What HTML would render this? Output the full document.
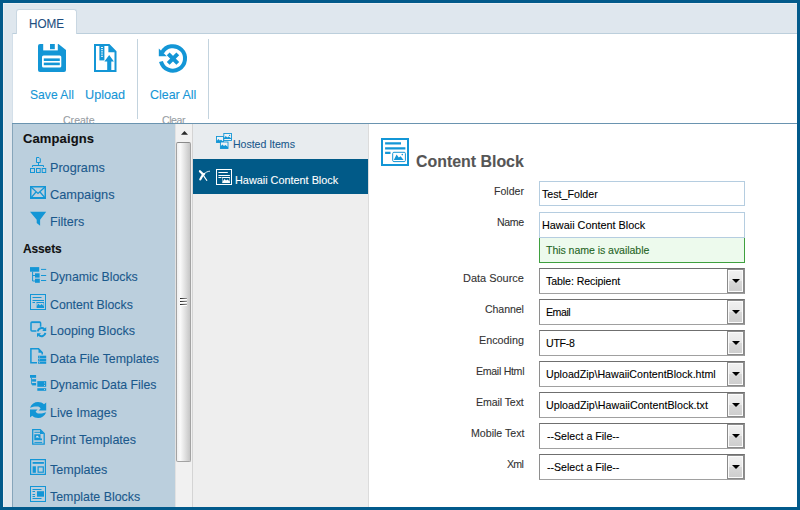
<!DOCTYPE html>
<html>
<head>
<meta charset="utf-8">
<title>Content Block</title>
<style>
*{box-sizing:border-box;margin:0;padding:0}
html,body{width:800px;height:510px;overflow:hidden}
body{background:#025a8b;font-family:"Liberation Sans",sans-serif;position:relative}
.a,.t,svg{position:absolute}
.t{line-height:1;white-space:pre;transform-origin:0 0;-webkit-text-stroke:0.1px currentColor}
svg{overflow:visible}
#inner{left:3px;top:3px;width:794px;height:504px;background:#dfe7ee;border-top:1px solid #ebf0f5;border-left:1px solid #e9eff4}
#ribbon{left:12px;top:33px;width:785px;height:91px;background:#fff;border-top:1px solid #bccfdc;border-left:1px solid #d3dfe9}
#tab{left:16px;top:9px;width:61px;height:25px;background:#fff;border:1px solid #c9d7e2;border-bottom:none;border-radius:3px 3px 0 0}
.sep{width:1px;background:#c3d3de;top:39px;height:80px}
#hline{left:12px;top:123px;width:785px;height:1px;background:#6a94b0}
#left{left:12px;top:124px;width:163px;height:383px;background:#bbcfdd;border-left:1px solid #86a5ba}
#sb{left:175px;top:124px;width:17px;height:383px;background:#f1f1f1;border-left:1px solid #e2e2e2}
#thumb{left:176px;top:142px;width:15px;height:320px;border:1px solid #a3a3a3;border-radius:2px;background:linear-gradient(90deg,#efefef,#fafafa 25%,#e2e2e2 60%,#c6c6c6);border-top-color:#8a8a8a}
#mid{left:192px;top:124px;width:177px;height:383px;background:#eeeeee;border-left:1px solid #d4d4d4;border-right:1px solid #dcdcdc}
#hrow{left:193px;top:124px;width:175px;height:36px;background:#e8ecef}
#sel{left:193px;top:159px;width:175px;height:35px;background:#015a88}
#main{left:369px;top:124px;width:428px;height:383px;background:#fff}
.inp{left:539px;width:206px;height:25px;border:1px solid #b5cde0;background:#fff}
.selb{left:539px;width:206px;height:26px;border:1px solid #8e8e8e;border-top-color:#6f6f6f;border-bottom-color:#a0a0a0;background:#fff}
.btn{position:absolute;right:0;top:0;width:17px;height:24px;border:1px solid #8a8a8a;background:linear-gradient(#f1f1f1,#e8e8e8 48%,#d8d8d8 52%,#cdcdcd);box-shadow:inset 0 0 0 1px #fbfbfb}
.btn:after{content:"";position:absolute;left:3.5px;top:9px;border-left:4px solid transparent;border-right:4px solid transparent;border-top:4.5px solid #000}
</style>
</head>
<body>
<div id="inner" class="a"></div>
<div id="ribbon" class="a"></div>
<div id="tab" class="a"></div>
<div class="a sep" style="left:137px"></div>
<div class="a sep" style="left:208px"></div>
<div class="t" style="left:62.7px;top:115.4px;font-size:11.5px;color:#979da3;letter-spacing:-0.02px;transform:scaleX(0.92)">Create</div>
<div class="t" style="left:162.0px;top:115.4px;font-size:11.5px;color:#979da3;letter-spacing:-0.48px;transform:scaleX(0.92)">Clear</div>
<div id="main" class="a"></div>
<div id="left" class="a"></div>
<div id="sb" class="a"></div>
<div id="thumb" class="a"></div>
<div id="mid" class="a"></div>
<div id="hrow" class="a"></div>
<div id="sel" class="a"></div>
<div class="a inp" style="top:181px"></div>
<div class="a inp" style="top:212px;height:26px"></div>
<div class="a" style="left:539px;top:238px;width:206px;height:25px;border:1px solid #3fa03f;border-top:none;background:#edfaed"></div>
<div class="a selb" style="top:268px"><span class="btn"></span></div>
<div class="a selb" style="top:299px"><span class="btn"></span></div>
<div class="a selb" style="top:330px"><span class="btn"></span></div>
<div class="a selb" style="top:361px"><span class="btn"></span></div>
<div class="a selb" style="top:392px"><span class="btn"></span></div>
<div class="a selb" style="top:423px"><span class="btn"></span></div>
<div class="a selb" style="top:454px"><span class="btn"></span></div>
<div class="t" style="left:28.5px;top:17.6px;font-size:12px;color:#1d4f80;letter-spacing:0.0px;transform:scaleX(0.977)">HOME</div>
<div class="t" style="left:29.6px;top:88.0px;font-size:13px;color:#1796d6;letter-spacing:0.0px;transform:scaleX(0.933)">Save All</div>
<div class="t" style="left:84.5px;top:88.0px;font-size:13px;color:#1796d6;letter-spacing:0.0px;transform:scaleX(0.975)">Upload</div>
<div class="t" style="left:149.5px;top:88.0px;font-size:13px;color:#1796d6;letter-spacing:0.0px;transform:scaleX(0.957)">Clear All</div>
<div class="t" style="left:23.0px;top:132.0px;font-size:13px;color:#111111;letter-spacing:0.12px;font-weight:bold">Campaigns</div>
<div class="t" style="left:49.6px;top:161.0px;font-size:13px;color:#1a598c;letter-spacing:0.0px;transform:scaleX(0.971)">Programs</div>
<div class="t" style="left:49.6px;top:188.0px;font-size:13px;color:#1a598c;letter-spacing:0.0px;transform:scaleX(0.982)">Campaigns</div>
<div class="t" style="left:49.6px;top:215.0px;font-size:13px;color:#1a598c;letter-spacing:0.0px;transform:scaleX(0.965)">Filters</div>
<div class="t" style="left:23.0px;top:241.6px;font-size:13px;color:#111111;letter-spacing:-0.12px;font-weight:bold;transform:scaleX(0.92)">Assets</div>
<div class="t" style="left:49.7px;top:270.4px;font-size:13px;color:#1a598c;letter-spacing:0.0px;transform:scaleX(0.949)">Dynamic Blocks</div>
<div class="t" style="left:49.7px;top:297.6px;font-size:13px;color:#1a598c;letter-spacing:0.0px;transform:scaleX(0.947)">Content Blocks</div>
<div class="t" style="left:49.6px;top:324.4px;font-size:13px;color:#1a598c;letter-spacing:0.0px;transform:scaleX(0.963)">Looping Blocks</div>
<div class="t" style="left:49.6px;top:351.6px;font-size:13px;color:#1a598c;letter-spacing:0.0px;transform:scaleX(0.951)">Data File Templates</div>
<div class="t" style="left:49.7px;top:378.4px;font-size:13px;color:#1a598c;letter-spacing:0.0px;transform:scaleX(0.945)">Dynamic Data Files</div>
<div class="t" style="left:49.6px;top:405.7px;font-size:13px;color:#1a598c;letter-spacing:0.0px;transform:scaleX(0.954)">Live Images</div>
<div class="t" style="left:49.6px;top:432.6px;font-size:13px;color:#1a598c;letter-spacing:0.0px;transform:scaleX(0.963)">Print Templates</div>
<div class="t" style="left:50.1px;top:462.7px;font-size:13px;color:#1a598c;letter-spacing:0.0px;transform:scaleX(0.968)">Templates</div>
<div class="t" style="left:50.1px;top:489.5px;font-size:13px;color:#1a598c;letter-spacing:0.0px;transform:scaleX(0.952)">Template Blocks</div>
<div class="t" style="left:232.5px;top:139.0px;font-size:11.5px;color:#1a598c;letter-spacing:-0.04px;transform:scaleX(0.92)">Hosted Items</div>
<div class="t" style="left:235.1px;top:175.3px;font-size:11.5px;color:#ffffff;letter-spacing:0.0px;transform:scaleX(0.944)">Hawaii Content Block</div>
<div class="t" style="left:415.6px;top:154.0px;font-size:16px;color:#555555;letter-spacing:0.0px;font-weight:bold;transform:scaleX(0.994)">Content Block</div>
<div class="t" style="left:493.7px;top:186.0px;font-size:11.5px;color:#333333;letter-spacing:-0.01px;transform:scaleX(0.92)">Folder</div>
<div class="t" style="left:496.5px;top:216.6px;font-size:11.5px;color:#333333;letter-spacing:-0.36px;transform:scaleX(0.92)">Name</div>
<div class="t" style="left:463.0px;top:273.0px;font-size:11.5px;color:#333333;letter-spacing:0.0px;transform:scaleX(0.952)">Data Source</div>
<div class="t" style="left:485.0px;top:304.0px;font-size:11.5px;color:#333333;letter-spacing:-0.1px;transform:scaleX(0.92)">Channel</div>
<div class="t" style="left:479.1px;top:335.0px;font-size:11.5px;color:#333333;letter-spacing:0.0px;transform:scaleX(0.936)">Encoding</div>
<div class="t" style="left:476.1px;top:366.0px;font-size:11.5px;color:#333333;letter-spacing:-0.32px;transform:scaleX(0.92)">Email Html</div>
<div class="t" style="left:476.1px;top:397.0px;font-size:11.5px;color:#333333;letter-spacing:-0.1px;transform:scaleX(0.92)">Email Text</div>
<div class="t" style="left:470.5px;top:428.0px;font-size:11.5px;color:#333333;letter-spacing:0.0px;transform:scaleX(0.923)">Mobile Text</div>
<div class="t" style="left:507.0px;top:459.0px;font-size:11.5px;color:#333333;letter-spacing:-0.76px;transform:scaleX(0.92)">Xml</div>
<div class="t" style="left:542.0px;top:188.6px;font-size:11.5px;color:#000000;letter-spacing:0.0px;transform:scaleX(0.928)">Test_Folder</div>
<div class="t" style="left:541.5px;top:219.7px;font-size:11.5px;color:#000000;letter-spacing:0.0px;transform:scaleX(0.943)">Hawaii Content Block</div>
<div class="t" style="left:545.5px;top:244.8px;font-size:11.5px;color:#1f651f;letter-spacing:-0.07px;transform:scaleX(0.92)">This name is available</div>
<div class="t" style="left:546.4px;top:275.6px;font-size:11.5px;color:#000000;letter-spacing:-0.08px;transform:scaleX(0.92)">Table: Recipient</div>
<div class="t" style="left:545.7px;top:307.0px;font-size:11.5px;color:#000000;letter-spacing:-0.48px;transform:scaleX(0.92)">Email</div>
<div class="t" style="left:545.7px;top:338.0px;font-size:11.5px;color:#000000;letter-spacing:-0.28px;transform:scaleX(0.92)">UTF-8</div>
<div class="t" style="left:545.8px;top:369.0px;font-size:11.5px;color:#000000;letter-spacing:0.0px;transform:scaleX(0.925)">UploadZip\HawaiiContentBlock.html</div>
<div class="t" style="left:545.8px;top:400.0px;font-size:11.5px;color:#000000;letter-spacing:0.0px;transform:scaleX(0.931)">UploadZip\HawaiiContentBlock.txt</div>
<div class="t" style="left:546.7px;top:431.0px;font-size:11.5px;color:#000000;letter-spacing:0.0px;transform:scaleX(0.92)">--Select a File--</div>
<div class="t" style="left:546.7px;top:462.0px;font-size:11.5px;color:#000000;letter-spacing:0.0px;transform:scaleX(0.92)">--Select a File--</div>
<div id="hline" class="a"></div>
<!-- ribbon: save -->
<svg style="left:38px;top:44px" width="28" height="28" viewBox="0 0 28 28"><path fill="#1396d6" d="M2 0H20.5L28 6V26a2 2 0 0 1-2 2H2a2 2 0 0 1-2-2V2A2 2 0 0 1 2 0Z"/><path fill="#fff" d="M5.2 0H19.800V6.400H5.2Z"/><rect x="12" y="0" width="4.800" height="5.200" fill="#1396d6"/><rect x="4" y="11.500" width="19.300" height="12.100" rx="1.600" fill="#fff"/><rect x="5.8" y="14.4" width="16" height="2.6" fill="#1396d6"/><rect x="5.8" y="18.6" width="16" height="2.6" fill="#1396d6"/></svg>
<!-- ribbon: upload -->
<svg style="left:94px;top:44px" width="23" height="28" viewBox="0 0 23 28"><path fill="#fff" stroke="#1396d6" stroke-width="2" d="M1 1H15L21.5 7.6V27H1Z"/><path fill="#1396d6" d="M14.400 1L21.500 8.200H14.400Z"/><rect x="5.4" y="0" width="5" height="16.4" fill="#1396d6"/><path d="M7 3.5h2M7 5.7h2M7 7.9h2M7 10.100h2M7 12.300h2" stroke="#fff" stroke-width="0.9"/><path fill="#1396d6" d="M15.200 11L19.900 17.600H17.300V27H13.200V17.600H10.400Z"/></svg>
<!-- ribbon: clear all -->
<svg style="left:158.200px;top:43.600px" width="30" height="30" viewBox="0 0 30 30"><path fill="none" stroke="#1396d6" stroke-width="4" d="M4.100 8.600A12.200 12.200 0 1 1 3 17.400"/><path fill="#1396d6" d="M0.800 4.600L0.800 12.200H8.800Z"/><path stroke="#1396d6" stroke-width="4" d="M10.200 9.800L19.800 19.400M19.800 9.800L10.200 19.400"/></svg>
<!-- nav: programs -->
<svg style="left:30px;top:157px" width="16" height="16" viewBox="0 0 16 16" fill="none" stroke="#1396d6" stroke-width="1"><path d="M6.500 0.500H9L10.300 1.800V5.500H6.500Z"/><path d="M8.500 5.500V8.500M2.500 10V8.500H13.500V10"/><rect x="0.500" y="11.500" width="4" height="4"/><rect x="6.500" y="11.500" width="3.700" height="4"/><rect x="12.200" y="11.500" width="3.500" height="4"/></svg>
<!-- nav: campaigns -->
<svg style="left:30px;top:186px" width="16" height="13" viewBox="0 0 16 13" fill="none" stroke="#1396d6"><path stroke-width="1.500" d="M0.750 0.750H15.250V12H0.750Z"/><path stroke-width="2" d="M0 12H16"/><path stroke-width="1.300" d="M1 1L8 7.400L15 1M1.200 11.600L6 6M14.800 11.600L10 6"/></svg>
<!-- nav: filters -->
<svg style="left:30px;top:211px" width="17" height="16" viewBox="0 0 17 16"><path fill="#1396d6" d="M0 0.700H16.200L10.100 8.700V14.800L6.700 12V8.700Z"/></svg>
<!-- nav: dynamic blocks -->
<svg style="left:30px;top:267px" width="17" height="16" viewBox="0 0 17 16"><g fill="#1396d6"><rect x="0" y="0.100" width="9.200" height="4.600"/><rect x="5" y="6.300" width="4.600" height="4.300"/><rect x="5" y="11.700" width="4.800" height="4.100"/></g><path fill="none" stroke="#1396d6" stroke-width="1" d="M2.600 4.700V14H5M2.600 8.500H5M11 2.400H16.200M11 8.500H16.200M11 13.500H16.200"/></svg>
<!-- nav: content blocks -->
<svg style="left:30px;top:294px" width="16" height="16" viewBox="0 0 16 16" fill="none" stroke="#1396d6" stroke-width="1"><rect x="0.500" y="0.500" width="15" height="15"/><path d="M2.500 3.500H11.500M2.500 6.500H14M2.500 8.500H5M6.500 8.500H14"/><path fill="#1396d6" stroke="none" d="M6.800 14.100V12L8.600 9.800L10 11.400L11.600 10L14 12.400V14.100Z"/><path d="M7 8.600V14M13.700 8.600V14" stroke-width="0.500"/></svg>
<!-- nav: looping blocks -->
<svg style="left:30px;top:321px" width="17" height="17" viewBox="0 0 17 17" fill="none" stroke="#1396d6"><path stroke-width="1.500" d="M6.400 10.100H2A1 1 0 0 1 1 9.100V2A1 1 0 0 1 2 1H9.600A1 1 0 0 1 10.600 2V5.800"/><path stroke-width="1" d="M1.600 1.600H10"/><path stroke-width="2" d="M7.800 10.400A3.900 3.900 0 0 1 14.400 8.200M15.400 11.800A3.900 3.900 0 0 1 8.800 14"/><path fill="#1396d6" stroke="none" d="M16.200 6V10H12.200ZM7 16.200V12.200H11Z"/></svg>
<!-- nav: data file templates -->
<svg style="left:30px;top:348px" width="17" height="16" viewBox="0 0 17 16"><path fill="none" stroke="#1396d6" stroke-width="1.500" d="M7 14.800H0.900V0.800H8.500L12.200 4.600V6.600"/><path fill="#1396d6" d="M8.500 0.800L12.500 4.800H8.500Z"/><g fill="#1396d6"><rect x="8.100" y="7.700" width="8.100" height="2.500"/><rect x="8.100" y="10.700" width="8.100" height="2.400"/><rect x="8.100" y="13.500" width="8.100" height="2.300"/></g><g fill="#bbcfdd"><rect x="9" y="8.600" width="0.900" height="0.800"/><rect x="9" y="11.500" width="0.900" height="0.800"/><rect x="9" y="14.300" width="0.900" height="0.800"/></g></svg>
<!-- nav: dynamic data files -->
<svg style="left:30px;top:375px" width="17" height="16" viewBox="0 0 17 16"><g fill="#1396d6"><rect x="0" y="0" width="6.100" height="2.800"/><rect x="2.100" y="4.200" width="4" height="2.400"/><rect x="2.100" y="8" width="4" height="2.400"/><rect x="7.300" y="6.100" width="8.900" height="5.700"/><rect x="7.300" y="13.200" width="8.900" height="2.600"/></g><path fill="none" stroke="#1396d6" stroke-width="0.800" d="M1.500 2.800V9.200H2.200M1.500 5.400H2.200"/><g fill="#bbcfdd"><rect x="14" y="7.500" width="1" height="0.900"/><rect x="14" y="10" width="1" height="0.900"/><rect x="14" y="14.100" width="1" height="0.900"/></g></svg>
<!-- nav: live images -->
<svg style="left:30px;top:402px" width="17" height="16" viewBox="0 0 17 16"><path fill="#1396d6" d="M0 5.800C1.400 2 4.600 0 8 0C10.400 0 12.400 0.800 14 2.200L16.200 0.600V8.400H8.600L10.600 6.600C9.800 5.200 8.600 4.600 7.400 4.600C5 4.400 2.600 5 0 5.800Z"/><path fill="#1396d6" d="M16.200 10.200C14.800 14 11.600 16 8.200 16C5.800 16 3.800 15.200 2.200 13.800L0 15.400V7.600H7.600L5.600 9.400C6.400 10.800 7.600 11.400 8.800 11.400C11.200 11.600 13.600 11 16.200 10.200Z"/></svg>
<!-- nav: print templates -->
<svg style="left:32px;top:429px" width="13" height="16" viewBox="0 0 13 16"><path fill="none" stroke="#1396d6" stroke-width="1.300" d="M0.700 0.700H8.300L12.200 4.600V15.200H0.700Z"/><path fill="#1396d6" d="M8 0.700L12.200 4.900H8Z"/><path stroke="#1396d6" stroke-width="1" d="M2.400 3.300H8M2.400 13.400H10.200"/><path fill="#1396d6" d="M2.300 5.200H8.500V9.600H10V11.300H2.300Z"/><path fill="#dce8ef" d="M3.600 8.400L5 6.400L7.600 8.400Z"/></svg>
<!-- nav: templates -->
<svg style="left:30px;top:459px" width="16" height="16" viewBox="0 0 16 16" fill="none" stroke="#1396d6"><rect x="0.600" y="0.600" width="14.800" height="14.800" stroke-width="1.200"/><rect x="2.600" y="3" width="11.300" height="1.800" fill="#1396d6" stroke="none"/><rect x="2.600" y="7.300" width="3.300" height="6.500" fill="#1396d6" stroke="none"/><rect x="8.100" y="7.900" width="5.200" height="5.300" stroke-width="1.200"/></svg>
<!-- nav: template blocks -->
<svg style="left:30px;top:486px" width="16" height="16" viewBox="0 0 16 16" fill="none" stroke="#1396d6" stroke-width="1"><rect x="0.500" y="0.500" width="15" height="15"/><path d="M2.500 3.500H11.500M2.500 5.500H5M2.500 8.500H5M2.500 10.500H5M2.500 12.500H11.500"/><rect x="7" y="5.200" width="7" height="5.500" fill="#1396d6" stroke="none"/></svg>
<!-- mid: hosted items -->
<svg style="left:216px;top:133px" width="16" height="16" viewBox="0 0 16 16" fill="none" stroke="#1396d6" stroke-width="0.900"><rect x="0.500" y="3.500" width="7" height="6" fill="#eef2f5"/><path fill="#1396d6" stroke="none" d="M0.500 9.500V8.200L2.400 6L3.800 7.600L5 6.800L7.500 8.800V9.500Z"/><rect x="4.400" y="9" width="7.600" height="6.500" fill="#eef2f5"/><path fill="#1396d6" stroke="none" d="M4.400 15.500V13.600L6.400 11.400L8 13L9.400 12L12 14V15.500Z"/><rect x="7.800" y="0.500" width="7.700" height="7" fill="#eef2f5"/><path fill="#1396d6" stroke="none" d="M7.800 6V5.200L9.800 3L11.200 4.600L12.600 3.600L15.500 5.600V6Z"/><circle cx="13.600" cy="2.400" r="0.600" fill="#1396d6" stroke="none"/></svg>
<!-- mid: plane -->
<svg style="left:198px;top:169px" width="13" height="13" viewBox="0 0 13 13" fill="none" stroke="#fff" stroke-linecap="round"><path stroke-width="2.300" d="M2 2.300C3.200 3.200 4.200 4.400 5 5.600"/><path stroke-width="1.100" d="M5 5.600C6.200 7.600 7.400 9.600 8.800 11.400"/><path stroke-width="0.900" d="M11.600 2.200C9.600 2.400 7.800 3.200 6.400 4.600"/><path stroke-width="2.200" d="M6.200 4.800C4.600 6.400 3.200 8.400 2.300 10.400"/></svg>
<!-- mid: content block white -->
<svg style="left:216px;top:169px" width="16" height="16" viewBox="0 0 16 16" fill="none" stroke="#fff" stroke-width="1"><rect x="0.500" y="0.500" width="15" height="15"/><path d="M2.400 3.500H11.800M2.400 6.500H13.900M2.400 8.500H5.500M6.400 8.500H13.900"/><rect x="6.700" y="8.500" width="6.900" height="5.300" stroke-width="0.500"/><path fill="#fff" stroke="none" d="M6.800 13.900V12.200L8.600 10L10 11.500L11.400 10.400L13.900 12.400V13.900Z"/></svg>
<!-- main: big content block icon -->
<svg style="left:381px;top:138px" width="28" height="28" viewBox="0 0 28 28" fill="none" stroke="#1396d6"><rect x="1" y="1" width="26" height="26" stroke-width="2"/><path stroke-width="2.200" d="M4.100 5.400H20M4.100 10.400H24.400M4.100 14.900H9.500"/><rect x="11.700" y="14.300" width="12.700" height="9.300" rx="1.200" stroke-width="1"/><path fill="#1396d6" stroke="none" d="M12.800 22L15.600 16.400L17.800 19.600L19.600 18.200L22.600 22Z"/><circle cx="21.300" cy="16.600" r="0.800" fill="#1396d6" stroke="none"/></svg>
<!-- scrollbar arrow + grip -->
<svg style="left:181px;top:131px" width="8" height="4" viewBox="0 0 8 4"><path fill="#2a2a2a" d="M0 3.800L3.500 0L7 3.800Z"/></svg>
<div class="a" style="left:180px;top:298px;width:7px;height:2px;background:linear-gradient(90deg,#222,#999);border-bottom:1px solid #fff;height:2px"></div>
<div class="a" style="left:180px;top:301px;width:7px;height:2px;background:linear-gradient(90deg,#222,#999);border-bottom:1px solid #fff"></div>
<div class="a" style="left:180px;top:304px;width:7px;height:2px;background:linear-gradient(90deg,#222,#999);border-bottom:1px solid #fff"></div>

</body>
</html>
